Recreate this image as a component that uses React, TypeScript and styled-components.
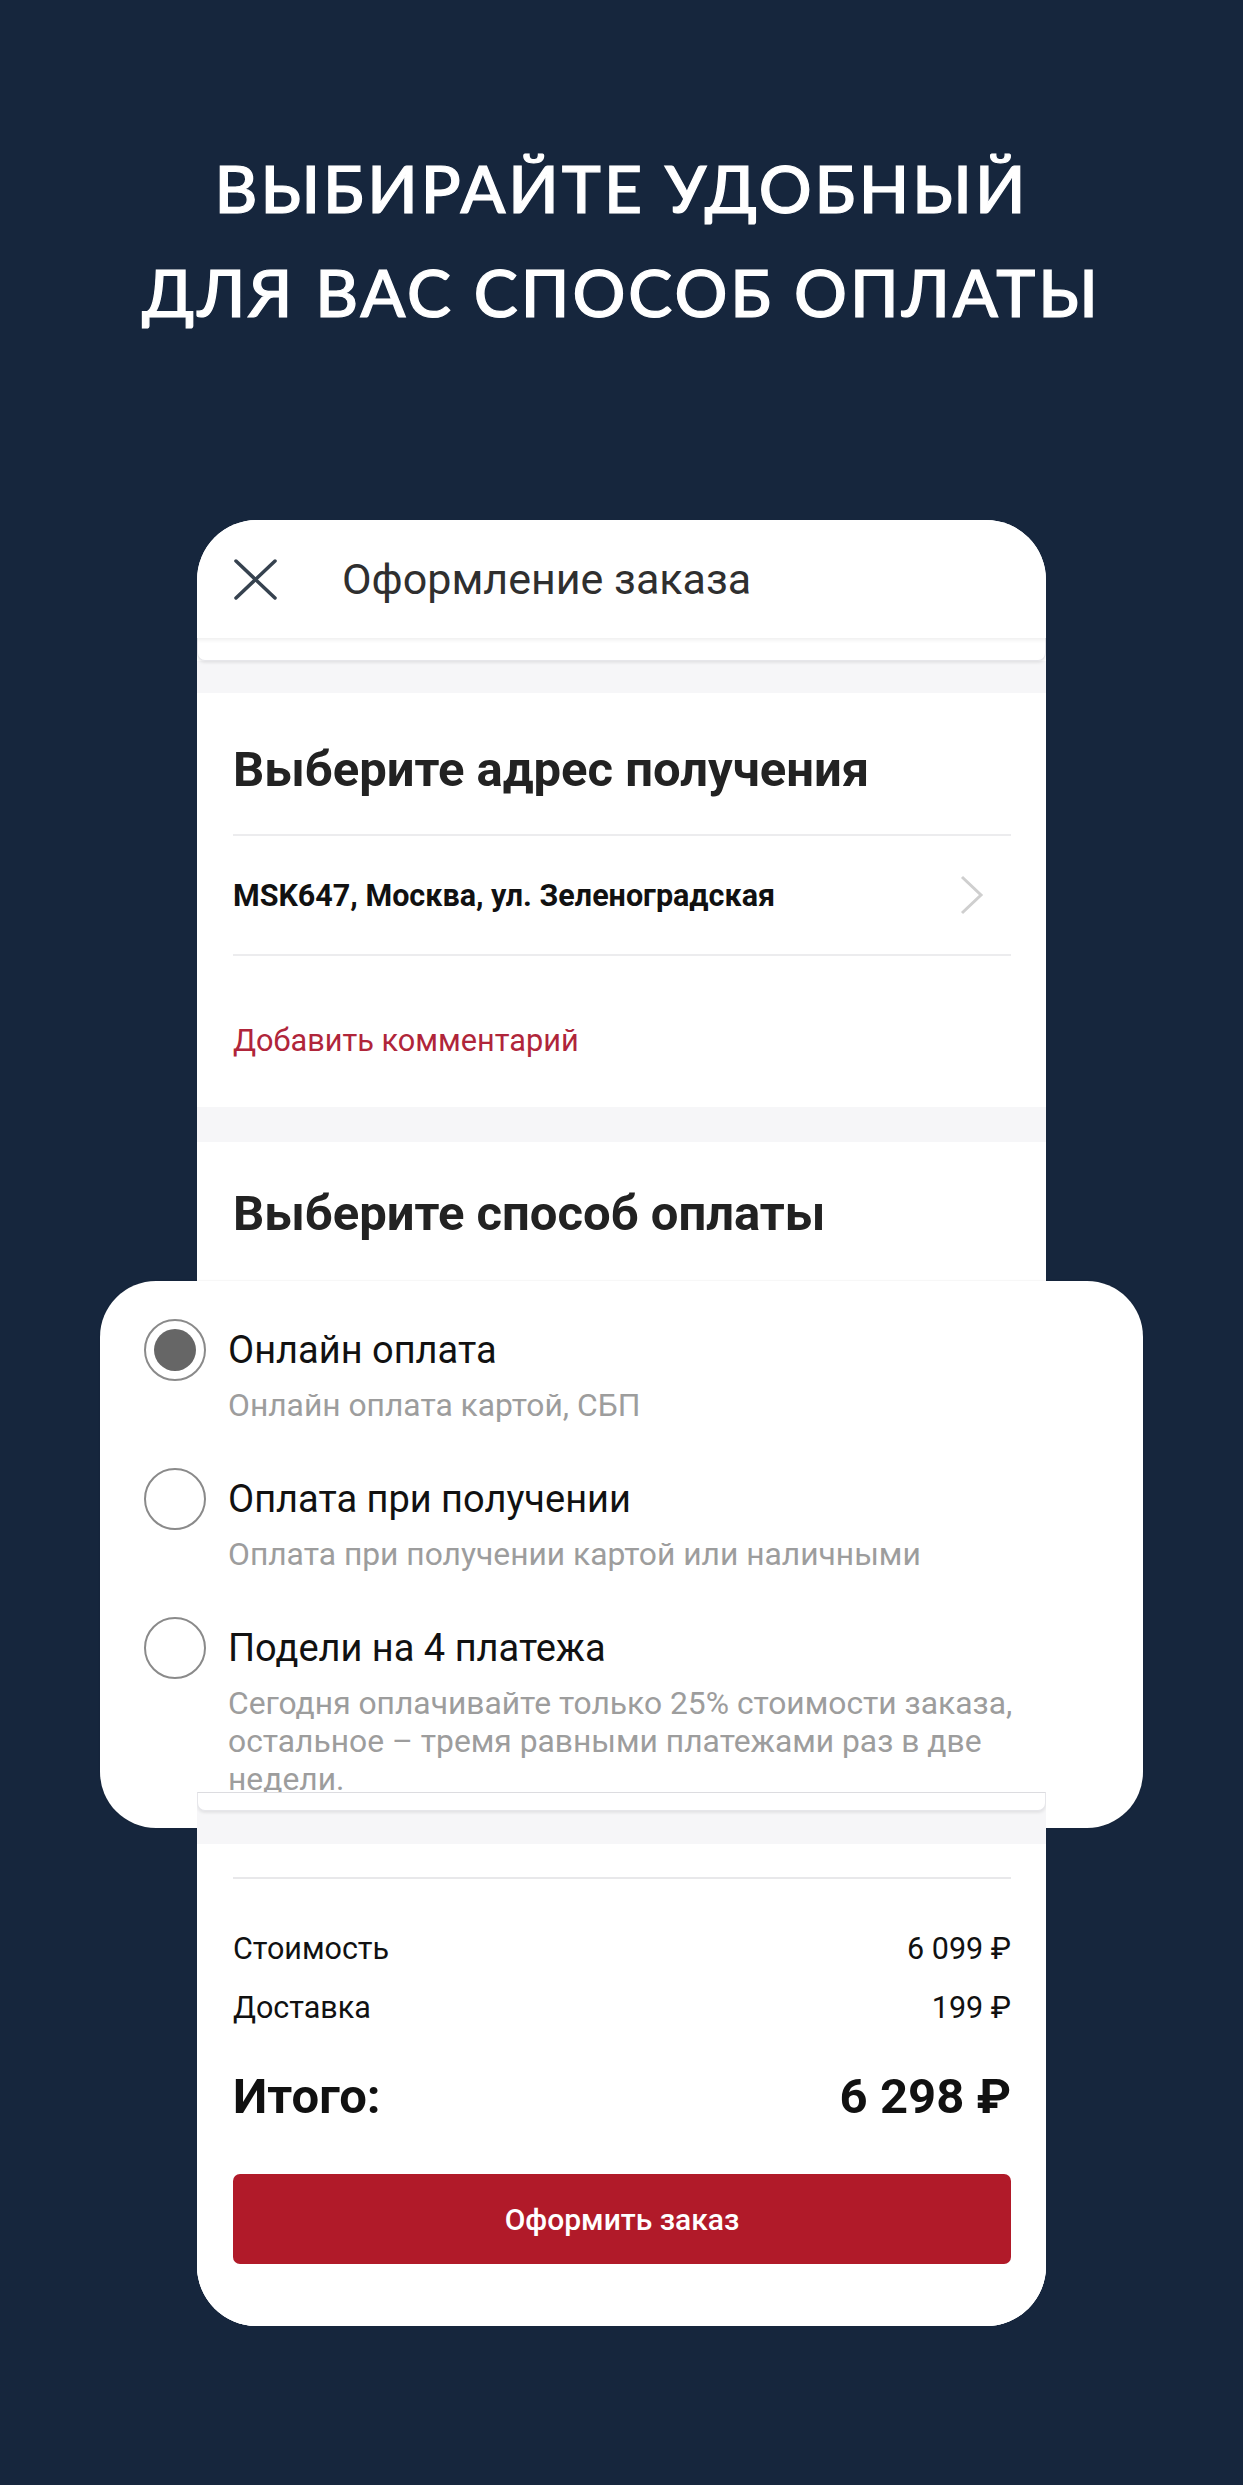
import React from 'react';
import styled, { createGlobalStyle } from 'styled-components';

const GlobalStyle = createGlobalStyle`
  html, body { margin: 0; padding: 0; background: #16263d; }
  * { box-sizing: border-box; }
`;

const Page = styled.div`
  width: 1243px;
  height: 2485px;
  background: #16263d;
  padding-top: 136px;
  overflow: hidden;
  font-family: Roboto, "Noto Sans", sans-serif;
`;

const Title = styled.h1`
  margin: 0;
  color: #fff;
  text-align: center;
  font-family: Lato, "Open Sans", sans-serif;
  font-weight: 500;
  font-size: 66px;
  line-height: 104px;
  letter-spacing: 3px;
  -webkit-text-stroke: 1.2px #fff;
`;

const Stage = styled.div`
  position: relative;
  width: 849px;
  margin: 176px auto 0;
`;

const Phone = styled.div`
  width: 849px;
  background: #fff;
  border-radius: 60px;
  overflow: hidden;
`;

const Header = styled.div`
  position: relative;
  height: 118px;
  display: flex;
  align-items: center;
  gap: 64px;
  padding: 0 36px;
  background: #fff;
  box-shadow: 0 2px 4px rgba(0, 0, 0, 0.07);
  z-index: 1;
`;

const HeaderTitle = styled.div`
  font-size: 43px;
  color: #2f2f2f;
  margin-top: -1px;
`;

const Remnant = styled.div<{ $shadow?: boolean }>`
  position: relative;
  height: ${p => (p.$shadow ? 19 : 23)}px;
  background: #fff;
  border-radius: 0 0 8px 8px;
  border: 1px solid #e6e6ea;
  border-top: ${p => (p.$shadow ? '1px solid #dcdce0' : 'none')};
  box-shadow: 0 2px 3px rgba(0, 0, 0, 0.08);
`;

const Gap = styled.div<{ $h: number }>`
  height: ${p => p.$h}px;
  background: #f6f6f8;
`;

const Section = styled.div<{ $pt: number; $pb: number; $h?: number }>`
  background: #fff;
  padding: ${p => p.$pt}px 35px ${p => p.$pb}px 36px;
  height: ${p => (p.$h ? `${p.$h}px` : 'auto')};
`;

const Heading = styled.div`
  font-size: 49px;
  font-weight: 700;
  line-height: 48px;
  color: #222;
`;

const AddressRow = styled.div`
  margin-top: 40px;
  height: 122px;
  border-top: 2px solid #ececee;
  border-bottom: 2px solid #ececee;
  display: flex;
  align-items: center;
  justify-content: space-between;
  padding-right: 27px;
`;

const AddressText = styled.div`
  font-size: 30.5px;
  font-weight: 700;
  color: #111;
`;

const CommentLink = styled.div`
  margin-top: 65px;
  font-size: 30.7px;
  line-height: 40px;
  color: #b0253a;
`;

const Bottom = styled.div`
  position: relative;
  z-index: 2;
  background: #f6f6f8;
`;

const Divider = styled.div`
  height: 2px;
  background: #e8e8ea;
`;

const SumRow = styled.div<{ $mt: number; $big?: boolean }>`
  display: flex;
  justify-content: space-between;
  align-items: center;
  margin-top: ${p => p.$mt}px;
  font-size: ${p => (p.$big ? 49 : 30.5)}px;
  font-weight: ${p => (p.$big ? 700 : 400)};
  line-height: ${p => (p.$big ? 56 : 40)}px;
  color: #111;
`;

const OrderButton = styled.button`
  display: block;
  width: 100%;
  height: 90px;
  margin-top: 49px;
  border: none;
  border-radius: 7px;
  background: #b11a29;
  color: #fff;
  font-family: Roboto, sans-serif;
  font-size: 30px;
  font-weight: 500;
`;

const Overlay = styled.div`
  position: absolute;
  z-index: 1;
  left: -97px;
  top: 761px;
  width: 1043px;
  height: 547px;
  background: #fff;
  border-radius: 56px;
  box-shadow: 0 0 2px rgba(0, 0, 0, 0.12);
  padding: 38px 40px 0 44px;
  display: flex;
  flex-direction: column;
  gap: 44px;
`;

const Option = styled.div`
  display: grid;
  grid-template-columns: 62px 1fr;
  column-gap: 22px;
`;

const Radio = styled.div<{ $checked?: boolean }>`
  width: 62px;
  height: 62px;
  border-radius: 50%;
  border: 2.5px solid #8a8a8a;
  display: flex;
  align-items: center;
  justify-content: center;
  &::after {
    content: '';
    display: ${p => (p.$checked ? 'block' : 'none')};
    width: 42px;
    height: 42px;
    border-radius: 50%;
    background: #666;
  }
`;

const OptionLabel = styled.div`
  font-size: 38px;
  line-height: 62px;
  color: #111;
`;

const OptionSub = styled.div`
  grid-column: 2;
  margin-top: 5px;
  font-size: 31.8px;
  line-height: 38px;
  color: #9d9d9d;
  white-space: nowrap;
`;

const CloseIcon = () => (
  <svg width="45" height="41" viewBox="0 0 45 41">
    <path d="M3 2 L42 39 M42 2 L3 39" stroke="#36424f" strokeWidth="3.5" strokeLinecap="round" />
  </svg>
);

const Chevron = () => (
  <svg width="25" height="40" viewBox="0 0 25 40">
    <path d="M3 2 L22 20 L3 38" fill="none" stroke="#cfcfcf" strokeWidth="3" />
  </svg>
);

const options = [
  { title: 'Онлайн оплата', sub: ['Онлайн оплата картой, СБП'], checked: true },
  { title: 'Оплата при получении', sub: ['Оплата при получении картой или наличными'] },
  {
    title: 'Подели на 4 платежа',
    sub: [
      'Сегодня оплачивайте только 25% стоимости заказа,',
      'остальное – тремя равными платежами раз в две',
      'недели.',
    ],
  },
];

export default function App() {
  return (
    <Page>
      <GlobalStyle />
      <Title>
        ВЫБИРАЙТЕ УДОБНЫЙ
        <br />
        ДЛЯ ВАС СПОСОБ ОПЛАТЫ
      </Title>
      <Stage>
        <Phone>
          <Header>
            <CloseIcon />
            <HeaderTitle>Оформление заказа</HeaderTitle>
          </Header>
          <Remnant />
          <Gap $h={32} />
          <Section $pt={53} $pb={46}>
            <Heading>Выберите адрес получения</Heading>
            <AddressRow>
              <AddressText>MSK647, Москва, ул. Зеленоградская</AddressText>
              <Chevron />
            </AddressRow>
            <CommentLink>Добавить комментарий</CommentLink>
          </Section>
          <Gap $h={35} />
          <Section $pt={48} $pb={0} $h={650}>
            <Heading>Выберите способ оплаты</Heading>
          </Section>
          <Bottom>
            <Remnant $shadow />
            <Gap $h={33} />
            <Section $pt={33} $pb={62}>
              <Divider />
              <SumRow $mt={50}>
                <span>Стоимость</span>
                <span>6 099 ₽</span>
              </SumRow>
              <SumRow $mt={19}>
                <span>Доставка</span>
                <span>199 ₽</span>
              </SumRow>
              <SumRow $mt={41} $big>
                <span>Итого:</span>
                <span>6 298 ₽</span>
              </SumRow>
              <OrderButton>Оформить заказ</OrderButton>
            </Section>
          </Bottom>
        </Phone>
        <Overlay>
          {options.map(o => (
            <Option key={o.title}>
              <Radio $checked={o.checked} />
              <OptionLabel>{o.title}</OptionLabel>
              <OptionSub>
                {o.sub.map((line, i) => (
                  <div key={i}>{line}</div>
                ))}
              </OptionSub>
            </Option>
          ))}
        </Overlay>
      </Stage>
    </Page>
  );
}
